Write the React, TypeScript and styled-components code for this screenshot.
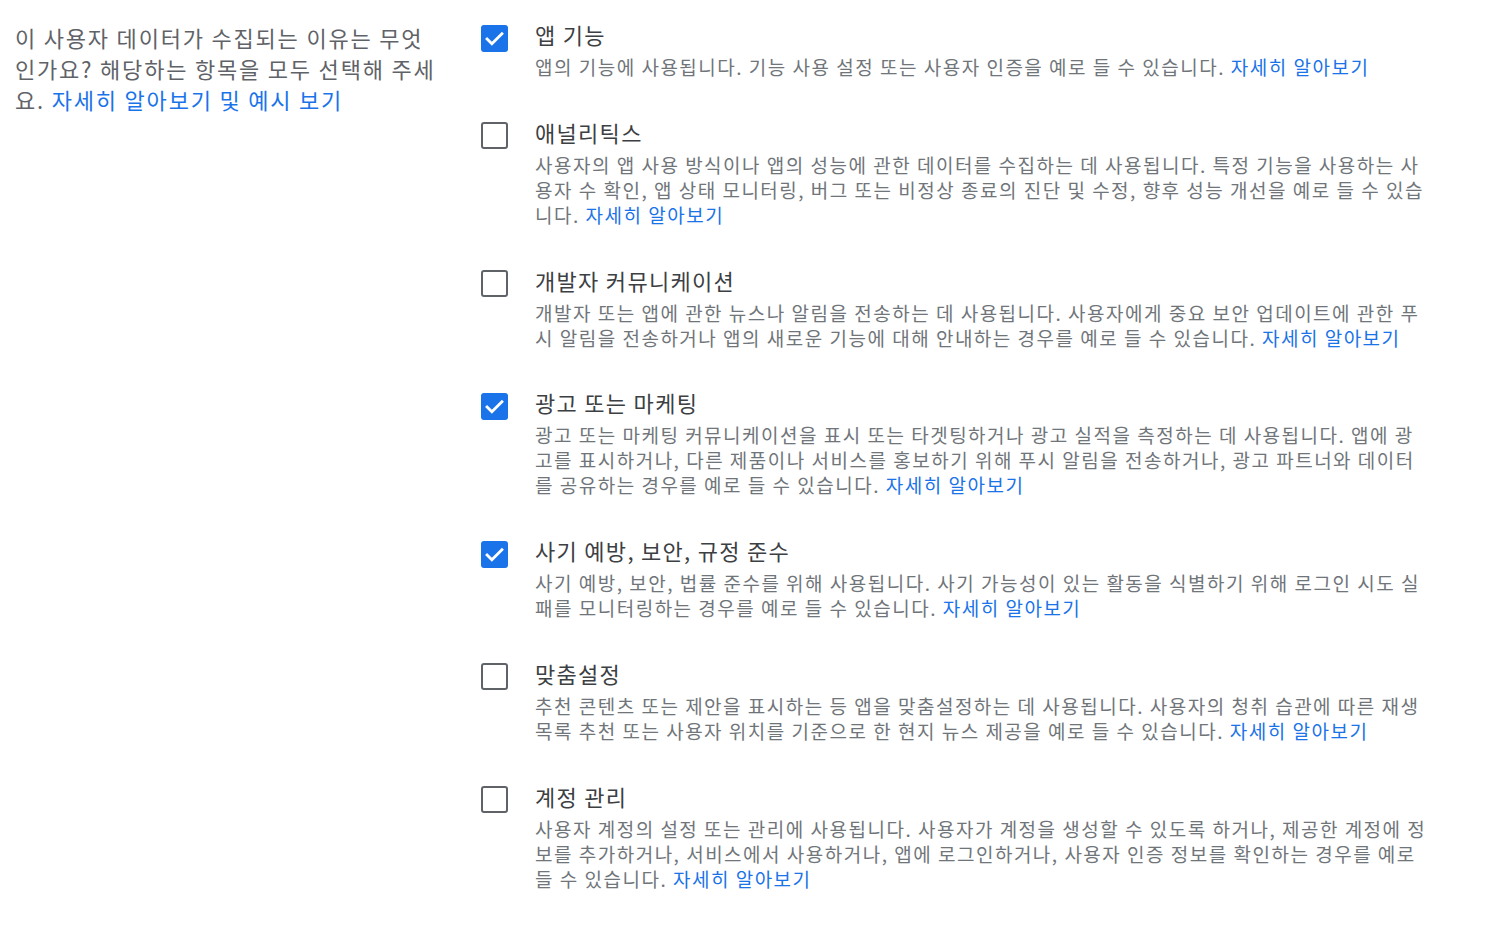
import styled, { createGlobalStyle } from 'styled-components';

const GlobalStyle = createGlobalStyle`
  body {
    margin: 0;
    background: #fff;
    font-family: 'Noto Sans CJK KR', 'Noto Sans', sans-serif;
  }
`;

const Page = styled.div`
  display: grid;
  grid-template-columns: 426px 949px;
  column-gap: 40px;
  padding: 19px 0 0 15px;
`;

const Question = styled.p`
  margin: 3px 0 0;
  color: #5f6368;
  font-size: 22px;
  letter-spacing: 1.8px;
  line-height: 31px;
`;

const Link = styled.a`
  color: #1a73e8;
  text-decoration: none;
  cursor: pointer;
`;

const List = styled.ul`
  list-style: none;
  margin: 0;
  padding: 0;
  display: flex;
  flex-direction: column;
  gap: 37.8px;
`;

const Item = styled.li`
  display: flex;
  align-items: flex-start;
  gap: 27px;
`;

const Box = styled.span<{ $checked: boolean }>`
  flex: none;
  width: 27px;
  height: 27px;
  margin-top: 5.5px;
  box-sizing: border-box;
  border-radius: 3px;
  display: flex;
  align-items: center;
  justify-content: center;
  background: ${(p) => (p.$checked ? '#1a73e8' : '#fff')};
  border: ${(p) => (p.$checked ? 'none' : '2.5px solid #5f6368')};
`;

const Content = styled.div`
  flex: none;
  width: 895px;
`;

const Title = styled.div`
  color: #3c4043;
  font-size: 22px;
  letter-spacing: 1.3px;
  line-height: 30px;
  margin-bottom: 5px;
`;

const Body = styled.p`
  margin: 0;
  color: #70757a;
  font-size: 19px;
  letter-spacing: 1.5px;
  line-height: 25px;
`;

const items = [
  {
    title: '앱 기능',
    checked: true,
    body: '앱의 기능에 사용됩니다. 기능 사용 설정 또는 사용자 인증을 예로 들 수 있습니다.',
  },
  {
    title: '애널리틱스',
    checked: false,
    body: '사용자의 앱 사용 방식이나 앱의 성능에 관한 데이터를 수집하는 데 사용됩니다. 특정 기능을 사용하는 사용자 수 확인, 앱 상태 모니터링, 버그 또는 비정상 종료의 진단 및 수정, 향후 성능 개선을 예로 들 수 있습니다.',
  },
  {
    title: '개발자 커뮤니케이션',
    checked: false,
    body: '개발자 또는 앱에 관한 뉴스나 알림을 전송하는 데 사용됩니다. 사용자에게 중요 보안 업데이트에 관한 푸시 알림을 전송하거나 앱의 새로운 기능에 대해 안내하는 경우를 예로 들 수 있습니다.',
  },
  {
    title: '광고 또는 마케팅',
    checked: true,
    body: '광고 또는 마케팅 커뮤니케이션을 표시 또는 타겟팅하거나 광고 실적을 측정하는 데 사용됩니다. 앱에 광고를 표시하거나, 다른 제품이나 서비스를 홍보하기 위해 푸시 알림을 전송하거나, 광고 파트너와 데이터를 공유하는 경우를 예로 들 수 있습니다.',
  },
  {
    title: '사기 예방, 보안, 규정 준수',
    checked: true,
    body: '사기 예방, 보안, 법률 준수를 위해 사용됩니다. 사기 가능성이 있는 활동을 식별하기 위해 로그인 시도 실패를 모니터링하는 경우를 예로 들 수 있습니다.',
  },
  {
    title: '맞춤설정',
    checked: false,
    body: '추천 콘텐츠 또는 제안을 표시하는 등 앱을 맞춤설정하는 데 사용됩니다. 사용자의 청취 습관에 따른 재생목록 추천 또는 사용자 위치를 기준으로 한 현지 뉴스 제공을 예로 들 수 있습니다.',
  },
  {
    title: '계정 관리',
    checked: false,
    body: '사용자 계정의 설정 또는 관리에 사용됩니다. 사용자가 계정을 생성할 수 있도록 하거나, 제공한 계정에 정보를 추가하거나, 서비스에서 사용하거나, 앱에 로그인하거나, 사용자 인증 정보를 확인하는 경우를 예로 들 수 있습니다.',
  },
];

const Check = () => (
  <svg width="21" height="21" viewBox="0 0 24 24" fill="none">
    <path d="M3.5 12.5l5.5 5.5L20.5 6.5" stroke="#fff" strokeWidth="3.2" strokeLinecap="square" />
  </svg>
);

export default function App() {
  return (
    <Page>
      <GlobalStyle />
      <Question>
        이 사용자 데이터가 수집되는 이유는 무엇인가요? 해당하는 항목을 모두 선택해 주세요.{' '}
        <Link>자세히 알아보기 및 예시 보기</Link>
      </Question>
      <List>
        {items.map((item) => (
          <Item key={item.title}>
            <Box $checked={item.checked} role="checkbox" aria-checked={item.checked}>
              {item.checked && <Check />}
            </Box>
            <Content>
              <Title>{item.title}</Title>
              <Body>
                {item.body} <Link>자세히 알아보기</Link>
              </Body>
            </Content>
          </Item>
        ))}
      </List>
    </Page>
  );
}
